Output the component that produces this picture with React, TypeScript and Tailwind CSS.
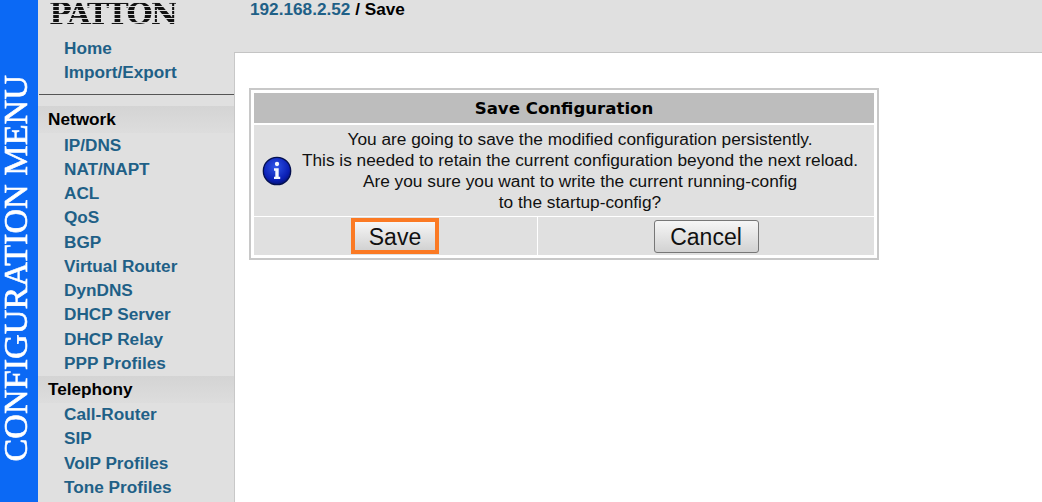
const sans = "font-['Liberation_Sans',Arial,sans-serif]";

const topLinks = ["Home", "Import/Export"];
const network = ["IP/DNS", "NAT/NAPT", "ACL", "QoS", "BGP", "Virtual Router", "DynDNS", "DHCP Server", "DHCP Relay", "PPP Profiles"];
const telephony = ["Call-Router", "SIP", "VoIP Profiles", "Tone Profiles"];

function NavLink({ label }: { label: string }) {
  return (
    <a className="block h-[24.25px] pl-[26px] text-[17.2px] leading-[24.25px] font-bold whitespace-nowrap text-[#1f6087]">
      {label}
    </a>
  );
}

function Section({ label }: { label: string }) {
  return (
    <div className="h-[27px] pl-[10px] text-[17.2px] leading-[27px] font-bold text-black bg-gradient-to-b from-[#d4d4d4] to-[#dddddd]">
      {label}
    </div>
  );
}

function InfoIcon() {
  return (
    <svg width="30" height="30" viewBox="0 0 32 32" className="mr-[2px] shrink-0">
      <defs>
        <radialGradient id="ib" cx="45%" cy="35%" r="70%">
          <stop offset="0%" stopColor="#2f55e8" />
          <stop offset="70%" stopColor="#0a1fb4" />
          <stop offset="100%" stopColor="#05106a" />
        </radialGradient>
      </defs>
      <circle cx="16" cy="16" r="14.6" fill="url(#ib)" stroke="#04104f" strokeWidth="1.4" />
      <circle cx="16" cy="8.5" r="2.3" fill="#f4f6ff" />
      <path d="M12.8 13h5v9h1.6v2.6h-6.6V22h1.4v-6.4h-1.4z" fill="#f4f6ff" />
    </svg>
  );
}

export default function App() {
  return (
    <div className={`${sans} flex h-[502px] w-[1042px] overflow-hidden bg-white`}>
      <div className="h-full w-[38px] shrink-0 overflow-hidden bg-[#0b69f5]">
        <div className="mt-[75px] w-[32px] font-['Liberation_Serif',serif] text-[34.2px] leading-[32px] whitespace-nowrap text-white rotate-180 [writing-mode:vertical-rl] [-webkit-text-stroke:0.6px_white]">
          CONFIGURATION MENU
        </div>
      </div>

      <div className="h-full w-[196px] shrink-0 bg-[#e0e0e0]">
        <div className="h-[36px] overflow-hidden pl-[11px]">
          <div className="-mt-[5px] w-fit font-['DejaVu_Serif',serif] text-[30px] leading-[38px] font-black tracking-[-2px] text-transparent bg-clip-text bg-[repeating-linear-gradient(to_bottom,#111111_0px,#111111_3px,#d8d8d8_3px,#d8d8d8_4px)]">
            PATTON
          </div>
        </div>
        {topLinks.map((l) => (
          <NavLink key={l} label={l} />
        ))}
        <div className="mt-[9px] ml-px mb-[11px] h-px bg-[#555]" />
        <Section label="Network" />
        {network.map((l) => (
          <NavLink key={l} label={l} />
        ))}
        <div className="h-[1px]" />
        <Section label="Telephony" />
        <div className="-mt-px">
          {telephony.map((l) => (
            <NavLink key={l} label={l} />
          ))}
        </div>
      </div>

      <div className="flex min-w-0 flex-1 flex-col">
        <div className="h-[53px] border-b border-[#c4c4c4] bg-[#e0e0e0] pl-[16px] text-[17.2px] leading-[19px] font-bold text-black">
          <span className="text-[#1f6087]">192.168.2.52</span> / Save
        </div>
        <div className="flex-1 border-l border-[#c8c8c8] pt-[35px] pl-[14px]">
          <div className="w-[630px] border-2 border-[#c8c8c8] p-[3px]">
            <div className="flex h-[30px] items-center justify-center bg-[#bdbdbd] pt-[1px] font-['DejaVu_Sans',sans-serif] text-[16.6px] leading-[30px] font-bold text-black">
              Save Configuration
            </div>
            <div className="mt-[2px] flex h-[91px] items-center bg-[#e0e0e0] pl-[8px]">
              <InfoIcon />
              <p className="flex-1 pr-[8px] text-center text-[17.3px] leading-[21px] text-[#111]">
                You are going to save the modified configuration persistently.
                <br />
                This is needed to retain the current configuration beyond the next reload.
                <br />
                Are you sure you want to write the current running-config
                <br />
                to the startup-config?
              </p>
            </div>
            <div className="flex h-[39px] border-t border-white bg-[#e0e0e0]">
              <div className="flex w-[284px] items-center justify-center border-r border-white pr-[1px]">
                <button className="h-[36px] w-[88px] border-4 border-[#fb7a24] bg-gradient-to-b from-[#f6f6f6] to-[#d2d2d2] pt-[2px] text-[23px] leading-none text-[#111]">
                  Save
                </button>
              </div>
              <div className="flex flex-1 items-center justify-center">
                <button className="h-[33px] w-[105px] rounded-[3px] border border-[#777] bg-gradient-to-b from-[#f6f6f6] to-[#d2d2d2] pt-[2px] text-[23px] leading-none text-[#111]">
                  Cancel
                </button>
              </div>
            </div>
          </div>
        </div>
      </div>
    </div>
  );
}
